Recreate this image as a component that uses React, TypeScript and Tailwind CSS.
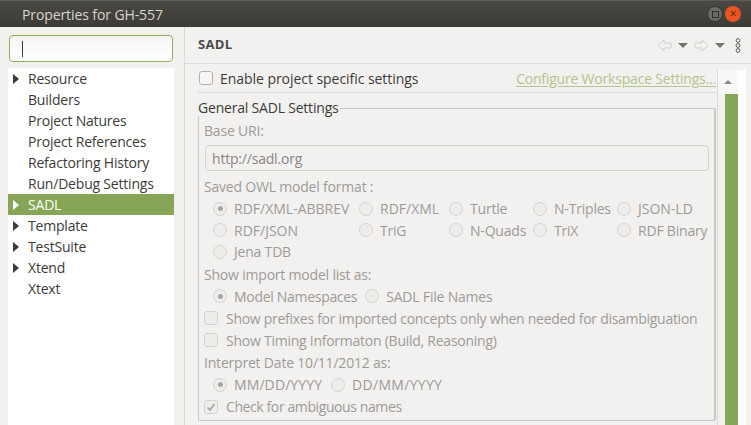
const font = "font-['Open_Sans','Noto_Sans',sans-serif]";

const tree = [
  { name: "Resource", arrow: true },
  { name: "Builders" },
  { name: "Project Natures" },
  { name: "Project References" },
  { name: "Refactoring History" },
  { name: "Run/Debug Settings" },
  { name: "SADL", arrow: true, active: true },
  { name: "Template", arrow: true },
  { name: "TestSuite", arrow: true },
  { name: "Xtend", arrow: true },
  { name: "Xtext" },
];

function Radio({ label, on, wide }: { label: string; on?: boolean; wide?: string }) {
  return (
    <div className="flex items-center h-[21.5px] min-w-0 whitespace-nowrap">
      <span className="w-[14px] h-[14px] rounded-full border border-[#d6d3cf] bg-[#efedeb] grid place-items-center shrink-0">
        {on && <span className="w-[5px] h-[5px] rounded-full bg-[#a8a5a2]" />}
      </span>
      <span className={`ml-[7px] text-[#9d9a97] ${wide ?? ""}`}>{label}</span>
    </div>
  );
}

function Check({ label, on, tight }: { label: string; on?: boolean; tight?: string }) {
  return (
    <div className="flex items-center h-[22px] whitespace-nowrap">
      <span className="w-[14px] h-[14px] rounded-[3px] border border-[#d6d3cf] bg-[#efedeb] grid place-items-center shrink-0">
        {on && (
          <svg width="10" height="10" viewBox="0 0 10 10" fill="none">
            <path d="M1.5 5.5 L4 8 L8.5 2" stroke="#a8a5a2" strokeWidth="1.7" />
          </svg>
        )}
      </span>
      <span className={`ml-[8px] text-[#9d9a97] ${tight ?? ""}`}>{label}</span>
    </div>
  );
}

function NavArrow({ flip }: { flip?: boolean }) {
  return (
    <svg width="15" height="13" viewBox="0 0 15 13" fill="none" className={flip ? "-scale-x-100" : ""}>
      <path d="M7 1 L1 6.5 L7 12 V9 H14 V4 H7 Z" fill="#f4f3f1" stroke="#cfcdc9" />
    </svg>
  );
}

function Caret() {
  return <span className="w-0 h-0 border-x-[5px] border-x-transparent border-t-[5px] border-t-[#77746f]" />;
}

export default function App() {
  return (
    <div className={`w-[751px] h-[425px] overflow-hidden flex flex-col bg-[#f2f1f0] text-[14px] tracking-[-0.2px] ${font}`}>
      <div className="h-[27px] shrink-0 flex items-center bg-gradient-to-b from-[#4a4843] to-[#3c3b37] pl-[22px] pr-[10px] border-t border-[#5d5b56]">
        <span className="text-[#d9d5cd] font-normal text-[14px] tracking-[-0.1px]">Properties for GH-557</span>
        <div className="ml-auto flex items-center gap-[2px]">
          <span className="w-[16px] h-[16px] rounded-full bg-[#6b6a66] border border-[#33322f] grid place-items-center">
            <span className="w-[7px] h-[7px] border border-[#2f2e2b]" />
          </span>
          <span className="w-[16px] h-[16px] rounded-full bg-[#e95420] grid place-items-center text-[#4a2113] text-[12px] leading-none">
            ×
          </span>
        </div>
      </div>

      <div className="flex-1 flex min-h-0">
        <div className="w-[185px] shrink-0 border-r border-[#dcdad7] pt-[8px] pl-[8px] pr-[10px] flex flex-col">
          <div className="h-[27px] mx-[1px] rounded-[4px] border border-[#8fb159] bg-gradient-to-b from-[#f5f5f4] to-[#ffffff] flex items-center pl-[12px]">
            <span className="w-px h-[16px] bg-[#3c3b37]" />
          </div>
          <div className="mt-[6px] flex-1 bg-white text-[#3c3b37]">
            {tree.map((t) => (
              <div
                key={t.name}
                className={`h-[21px] flex items-center ${t.active ? "bg-[#87a556] text-white" : ""}`}
              >
                <span className="w-[20px] pl-[5px] shrink-0">
                  {t.arrow && (
                    <span
                      className={`block w-0 h-0 border-y-[5.5px] border-y-transparent border-l-[6px] ${
                        t.active ? "border-l-white" : "border-l-[#3c3b37]"
                      }`}
                    />
                  )}
                </span>
                <span className="whitespace-nowrap">{t.name}</span>
              </div>
            ))}
          </div>
        </div>

        <div className="flex-1 min-w-0 flex flex-col">
          <div className="h-[37px] shrink-0 flex items-center pl-[13px] pr-[10px] border-b border-[#dcdad7]">
            <span className="font-bold text-[#4c4a46] text-[13px] tracking-[0.3px]">SADL</span>
            <div className="ml-auto flex items-center">
              <NavArrow />
              <span className="ml-[6px] flex"><Caret /></span>
              <span className="ml-[6px] flex"><NavArrow flip /></span>
              <span className="ml-[6px] flex"><Caret /></span>
              <svg width="6" height="15" viewBox="0 0 6 15" fill="none" className="ml-[10px]">
                <circle cx="3" cy="2.5" r="1.9" stroke="#5c5a56" />
                <circle cx="3" cy="7.5" r="1.9" stroke="#5c5a56" />
                <circle cx="3" cy="12.5" r="1.9" stroke="#5c5a56" />
              </svg>
            </div>
          </div>

          <div className="flex-1 flex min-h-0 overflow-hidden">
            <div className="flex-1 min-w-0 pl-[13px] pr-[1px]">
              <div className="h-[29px] flex items-center border-b border-[#dcdad7] pl-[1px]">
                <span className="w-[14px] h-[14px] rounded-[3px] border border-[#b4b1ad] bg-[#f7f6f5]" />
                <span className="ml-[7px] text-[#3c3b37] tracking-[-0.05px]">Enable project specific settings</span>
                <span className="ml-auto text-[#b2c48e] underline underline-offset-2 whitespace-nowrap">
                  Configure Workspace Settings...
                </span>
              </div>

              <div className="mt-[15px] relative h-[313px] border border-[#c9c7c4] border-r-2 rounded-[2px] pl-[5px] pr-[5px] pt-[11px]">
                <span className="absolute -top-[10px] -left-[1px] bg-[#f2f1f0] pr-[1px] leading-[17px] text-[#3c3b37]">
                  General SADL Settings
                </span>
                <div className="text-[#9d9a97] h-[21px] leading-[21px]">Base URI:</div>
                <div className="mt-[4px] ml-[1px] h-[26px] rounded-[4px] border border-[#d6d3cf] bg-[#f2f1f0] flex items-center pl-[6px] text-[#8a8784]">
                  http://sadl.org
                </div>
                <div className="text-[#9d9a97] h-[21px] leading-[21px] mt-[5px]">Saved OWL model format :</div>
                <div className="mt-[1px] pl-[9px] grid grid-cols-[146px_90px_84px_84px_1fr]">
                  <Radio label="RDF/XML-ABBREV" on wide="tracking-[0px]" />
                  <Radio label="RDF/XML" wide="tracking-[0px]" />
                  <Radio label="Turtle" />
                  <Radio label="N-Triples" />
                  <Radio label="JSON-LD" wide="tracking-[0px]" />
                  <Radio label="RDF/JSON" wide="tracking-[0px]" />
                  <Radio label="TriG" />
                  <Radio label="N-Quads" />
                  <Radio label="TriX" />
                  <Radio label="RDF Binary" />
                  <Radio label="Jena TDB" />
                </div>
                <div className="text-[#9d9a97] h-[21px] leading-[21px] mt-[1px]">Show import model list as:</div>
                <div className="mt-[1px] pl-[9px] flex gap-[8px]">
                  <Radio label="Model Namespaces" on wide="tracking-[-0.3px]" />
                  <Radio label="SADL File Names" />
                </div>
                <Check label="Show prefixes for imported concepts only when needed for disambiguation" tight="tracking-[-0.28px]" />
                <Check label="Show Timing Informaton (Build, Reasoning)" tight="tracking-[-0.25px]" />
                <div className="text-[#9d9a97] h-[21px] leading-[21px] mt-[1px]">Interpret Date 10/11/2012 as:</div>
                <div className="mt-[1px] pl-[9px] flex gap-[9px]">
                  <Radio label="MM/DD/YYYY" on wide="tracking-[0.1px]" />
                  <Radio label="DD/MM/YYYY" wide="tracking-[0.3px]" />
                </div>
                <Check label="Check for ambiguous names" on tight="tracking-[-0.4px]" />
              </div>
            </div>

            <div className="w-[34px] shrink-0 flex pt-[6px]">
              <div className="w-[21px] border-l border-[#dcdad7] flex flex-col">
                <div className="h-[24px] bg-[#f7f7f6] grid place-items-center">
                  <span className="w-0 h-0 border-x-[4px] border-x-transparent border-b-[4px] border-b-[#8b8986]" />
                </div>
                <div className="flex-1 flex pl-[7px] bg-[#f2f1f0]">
                  <div className="w-[13px] bg-[#87a556]" />
                </div>
              </div>
              <div className="w-[8px] bg-white" />
              <div className="flex-1" />
            </div>
          </div>
        </div>
      </div>
    </div>
  );
}
